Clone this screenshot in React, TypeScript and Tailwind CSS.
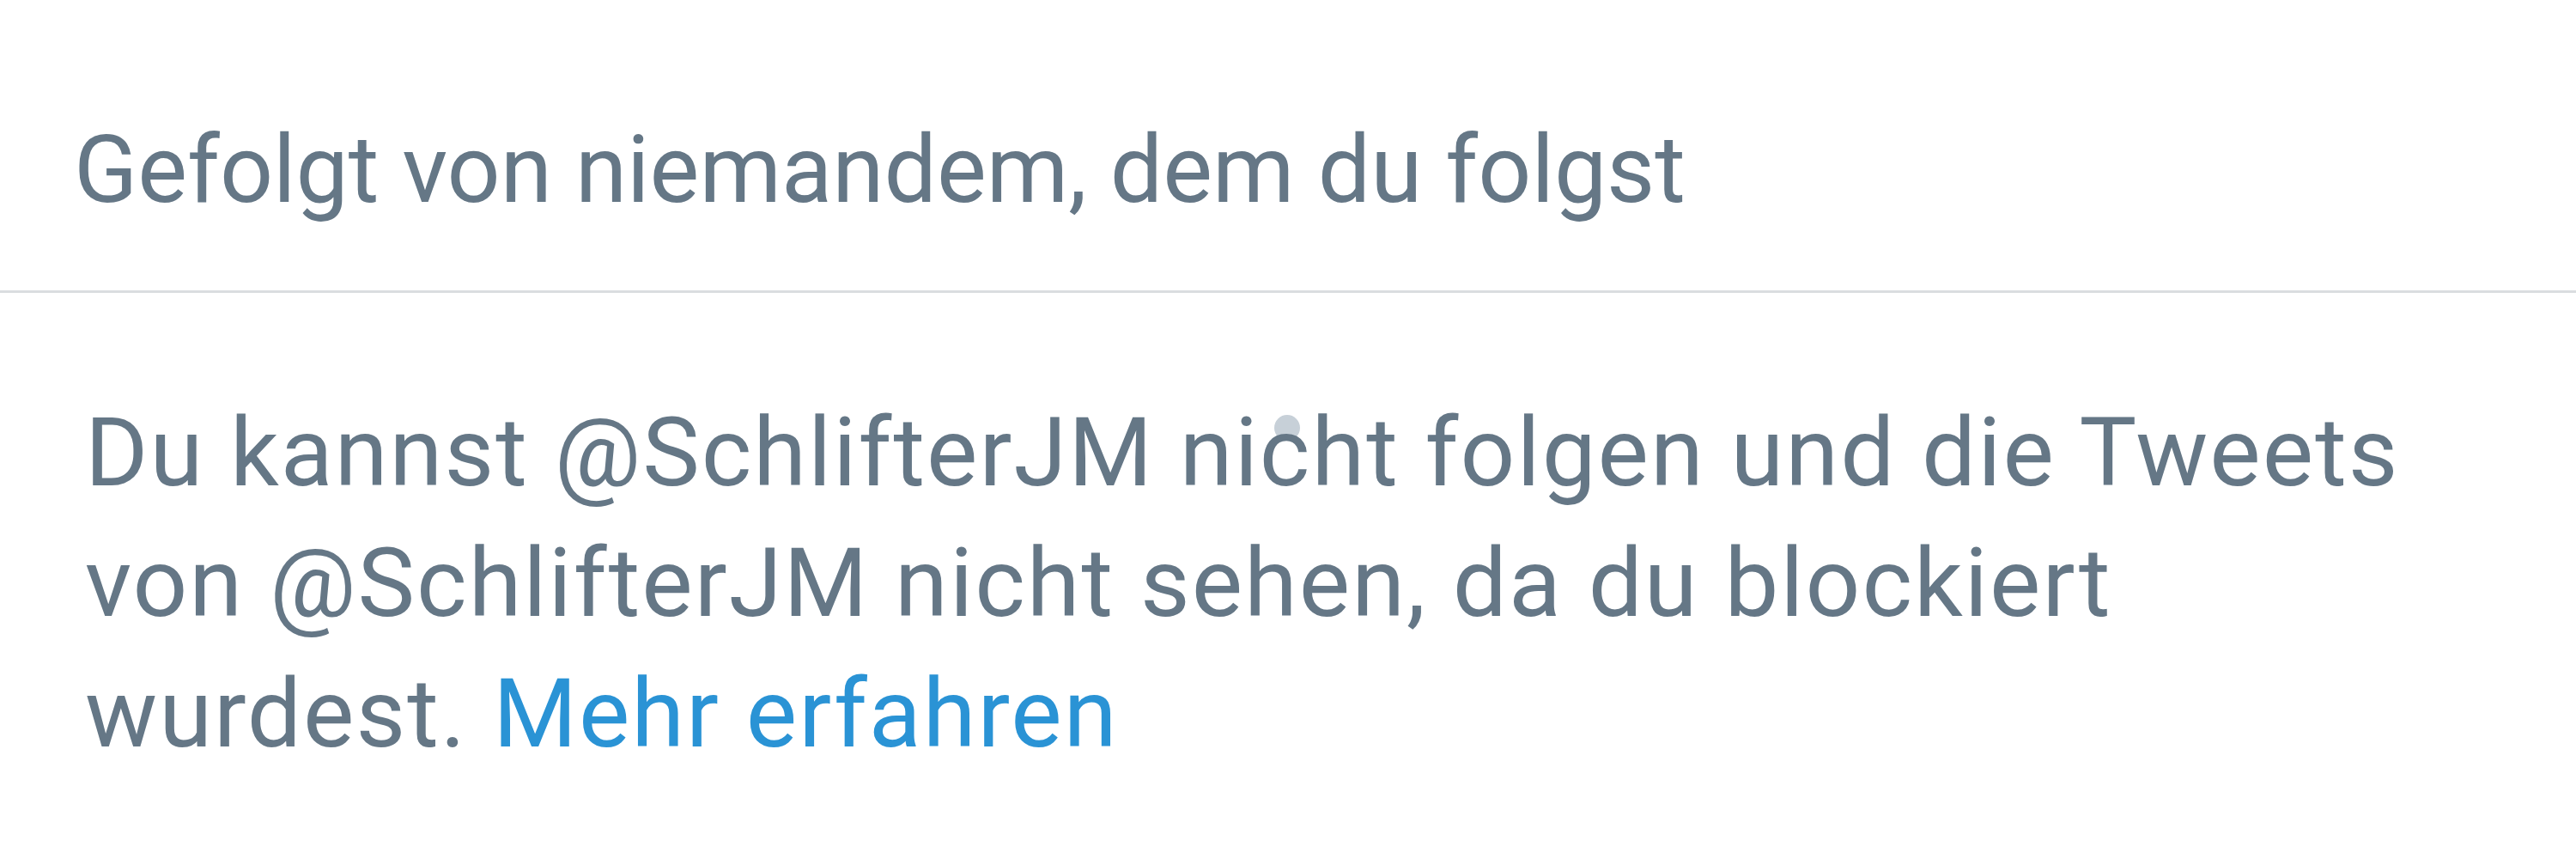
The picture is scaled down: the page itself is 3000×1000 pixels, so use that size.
export default function App() {
  return (
    <div className="w-[3000px] h-[1000px] overflow-hidden bg-white font-['Roboto','Liberation_Sans',sans-serif] text-[#657786]">
      <div className="pt-[122px] pb-[64px] pl-[86px]">
        <p className="text-[109px] leading-[152px] whitespace-nowrap">Gefolgt von niemandem, dem du folgst</p>
      </div>
      <div className="h-[3px] bg-[#dadde0]" />
      <div className="relative pt-[110px] pl-[99px]">
        {/* touch indicator dot */}
        <div className="absolute left-[1484px] top-[142px] h-[30px] w-[30px] rounded-full bg-[#c7d0d8]" />
        <p className="relative text-[112px] leading-[152px] tracking-[2px] whitespace-nowrap">
          Du kannst @SchlifterJM nicht folgen und die Tweets
          <br />
          von @SchlifterJM nicht sehen, da du blockiert
          <br />
          wurdest. <span className="text-[#2a93d5]">Mehr erfahren</span>
        </p>
      </div>
    </div>
  );
}
